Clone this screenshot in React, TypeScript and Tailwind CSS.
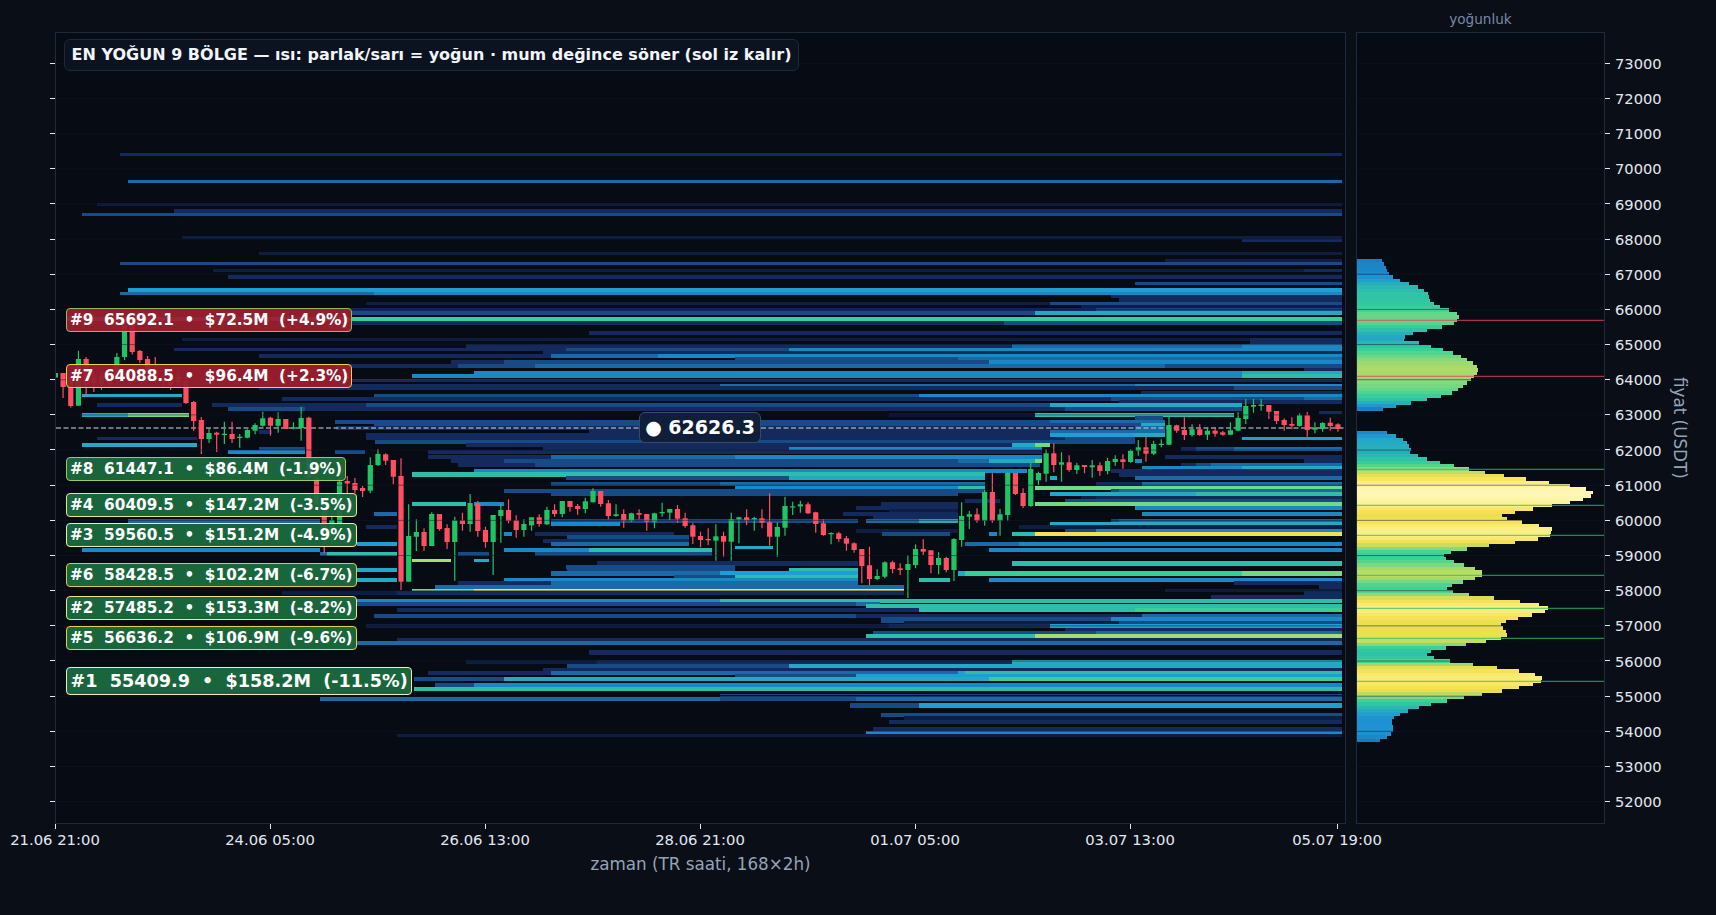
import { type JSX } from "react";

const FONT = "[font-family:'DejaVu_Sans',sans-serif]";

// price -> page y, the chart svgs use page coordinates in their viewBox
const priceY = (p: number) => 63.3 + (73000 - p) * 0.03516;
const candleX = (i: number) => 55.4 + 7.68 * i;

const PRICES = Array.from({ length: 22 }, (_, i) => 73000 - i * 1000);

const HEAT_COLORS: Record<string, string> = {
  a: "#0c1632",
  b: "#0f1d40",
  c: "#14295c",
  d: "#184a86",
  e: "#1a6aa8",
  f: "#1b88c6",
  g: "#1f9ed4",
  h: "#22a9c4",
  i: "#2ebdaa",
  j: "#35cf9a",
  k: "#70d986",
  l: "#a9dd6a",
  m: "#f5e050",
  n: "#fff3a0",
};

// y height then segments: start x + colour letter, "_" leaves a gap
const HEAT = `
154.3 2.7 120c
181.3 2.7 128e
204.3 2.7 97b
210.7 3 174c
214.3 2.7 82d
237.7 2.7 182b
240.3 2.5 1242c
253.3 2.7 259b
260.3 2.7 1165b
263.3 2.7 120d
270.3 2.7 213b 1196b 1304c
276.7 3.5 228c
283.3 2.7 1135d
290 4 128g
293.3 2.7 120e 374f
296.3 2.7 1111c
299.7 3 1119c
303.3 2.7 366b 1050d
306.3 2.7 1081b
309.3 2.7 347c 1096d
313.3 3 351d 1035h
319.3 3.3 66j
323 3 351c 1004d
333 3.5 589c
339.3 2.7 182b 1250c
343 2.7 1250c
346 3 466c 1012e 1242f
349.3 2.7 174c 566d 789f
352.3 2.7 543c
356 3.7 259c 551e 658f
359 2.7 735d 958e
362.3 3 451c 504d 989f
365.7 3.2 336c 458d 535e 1165d
369.3 2.7 1304c
372.7 3.7 474f 1242h
376 3.5 412f 1242i
379.3 1.5 351d
381 1.5 351c
385.7 3 351c 720e 1135f
388.3 3 259c 1234d
392.3 2.7 1141c
395.3 2.7 82h 182_ 374d 919f
398.7 3 282c 1111d 1304e
402 2.7 1119c
405.3 3 97c 182_ 212c 366d 1050h 1242_
408.7 3 228d 305c 881c 1065d 1242_
412.3 2.7 1319c
415.3 3 82h 128k 189_ 889a 1035i 1234_
418 2.7 1135d 1163_
421.7 3 335d 1050e 1165_
425 3 374d 1141h 1165_
428 3 336c 1135e 1165_
431.7 3 259c 272_ 589c 1050e 1165_
435.3 3 366c 1050g 1135h 1165_
438.5 3 97c 197_ 366c 1065d 1135_ 1242g
442 3 375d 1096d 1135_
445.3 3 82h 197_ 466c 1012h 1035k 1050_
448.7 3 259d 305_ 543c 789f 1042_ 1181c 1196d 1234e
452 3.2 228f 305_ 335d 365_ 428c 1042_
457.3 3 428c 551e 735f 1042_ 1165c
461.3 3 451c 504d 958e 989h 1035k 1042_ 1135f 1142_ 1304c
465 3 458c 535d 1040_ 1181c 1196d 1211e
468.3 3 1142f 1242h
471.3 3 474f 1027_ 1111c
474.7 4 412i 985_ 1119c
478.3 3 566d 789h 985_ 1050h 1057_ 1135e
484.3 3 551d 720e 985_ 1096c 1142e
488 4 735f 958i 985_ 1035k
490.7 3 504d 985_ 1111d 1119e
494.3 3 551d 958_ 1050h 1196i
497.7 3 1081b 1096c
501.3 3 965c 1000_ 1065d
504.3 3 412i 466_ 474f 504_ 881c 958_ 1035k
507.7 3.5 856c 958_ 1135f
511 3 889b 958_
514.3 3 374e 397_ 843c 958_ 1142f
517.5 3 873c 958_
521 3 128e 320_ 551d 858_ 866e 919h 958_ 1111d 1119e
524.3 3 551f 620_ 1050h
527.3 3 366c 397_ 1019b
530.7 3.5 856b 958_ 1065d 1096f
534.3 3.3 504f 512_ 535c 674_ 882d 950_ 989f 997_ 1012i 1035m
537.2 3 567d 689_
540.7 3 543c 689_
544.3 3 357g 397_ 551e 689_ 965e 1019f
547.5 3 735h 773_
550.3 3 82f 320_ 504f 589i 712_ 989f
554 3 320e 327i 397_ 458d 489_ 535d 712_
560.5 3 412l 451_ 474h 489_
563.7 4 597c 858_ 1012i
566.7 3 566d 597d 735_
570.3 3 357h 397_ 567d 735_ 789i 858_
573.7 4 551e 720g 858_ 958h 965j 1242k
577 3 674d 735i 858_
580.3 3 357h 397_ 504f 858_ 919i 950_ 989f
583.3 3 458c 551e 858_ 1234c
587 3 435e 904_ 1319c
590.3 2.5 412k 474m 904_ 1165b
593.3 3 282b 397c 904_ 1304c
596.7 3 1211c
600.7 3.5 357f 720i
604 3 357d 856e 880_
607 5 866i
610.3 3.2 397c 919i 1135j
616.3 3 374d 856c 1142e
619.7 5 881d 1111f
623 3 904b 1119d
626.3 3 366b 889c 1050g
629.7 3 1065c
633.3 3 873d 1096e
636.3 3.3 866i 1035l
640 3 397c
643.3 3 357e 1004e
652.7 4 589c
662.3 3 466b 597c 1012h
666.3 3 567d 789h
669.5 2.5 543c
673 4 428c 551e 958g 965i
676.3 3 735d 856g
679.3 3 414d 504h 989j
685.7 4 435d 474f
689.3 3 414i
694.7 1.5 720d
696.2 1.2 720d
699.3 3 320e 720d 856e
705.7 4 850d 919g
715.3 3 881d
718 2.5 904b
722.3 3 889c
728.7 3 873c
732.3 2 866f
735.3 2.5 397b
`;

const HEAT_END = 1342;

const HEAT_RECTS = HEAT.trim()
  .split("\n")
  .flatMap((line) => {
    const [y, h, ...segs] = line.trim().split(" ");
    const height = Number(h) < 2 ? Number(h) : Number(h) + 0.7;
    return segs.map((s, i) => ({
      x: parseFloat(s),
      end: i + 1 < segs.length ? parseFloat(segs[i + 1]) : HEAT_END,
      color: s.slice(-1),
      y: Number(y) - height / 2,
      h: height,
    }));
  })
  .filter((r) => r.color !== "_");

// colour, body top, body bottom, wick top, wick bottom (page px), index = candle number
type Candle = ["g" | "r", number, number, number, number];
const CANDLES: Candle[] = [
  ["g", 373, 377.5, 372, 378], ["r", 373, 387, 373, 398], ["r", 377, 406, 375, 407.5], ["g", 359, 405.7, 350.7, 405.7],
  ["r", 359, 385, 357, 395], ["r", 378, 383, 372, 392], ["g", 376, 384, 372, 390], ["r", 378, 384, 374, 388],
  ["g", 357, 380, 353, 382], ["g", 325, 357, 318, 360], ["r", 322, 352, 318, 354.5], ["r", 351, 360, 350, 363],
  ["r", 359, 372, 356, 378], ["r", 372, 381, 357, 385], ["r", 379, 382, 375, 388], ["r", 380, 385, 376, 390],
  ["g", 377, 382, 372, 386], ["r", 380, 403, 376, 404], ["r", 402, 421, 401, 431], ["r", 420, 439, 417, 454],
  ["g", 433, 439, 428, 443], ["r", 432.7, 434.7, 431.7, 452], ["g", 433.7, 435, 421.7, 444], ["r", 434, 439, 421.7, 443],
  ["g", 436.7, 438, 434, 447.7], ["g", 430, 437.7, 429.3, 438.3], ["g", 425, 430.7, 423.3, 434.3], ["g", 418.3, 425.7, 411.7, 426.7],
  ["r", 417.7, 425.7, 416.7, 435.7], ["g", 419, 425.7, 412.3, 432.7], ["r", 419, 429, 419, 429], ["g", 427.3, 428.7, 422.3, 429.3],
  ["g", 418, 428, 406.7, 440.7], ["r", 417.7, 478, 416.7, 480], ["r", 478, 505, 476, 508], ["r", 505, 540, 503, 553],
  ["g", 520, 540, 515, 545], ["g", 481.7, 525, 478, 527], ["r", 481, 483.5, 476, 495], ["r", 483, 490, 478, 493],
  ["r", 488, 491, 486, 497], ["g", 465, 490.7, 457.3, 493.3], ["g", 454, 465, 449, 466], ["r", 454.3, 460.7, 453.3, 465],
  ["r", 460, 476.7, 460, 484.3], ["r", 476, 581.7, 458.3, 590], ["g", 536, 581.7, 504.3, 581.7], ["g", 532, 536.7, 519.3, 551],
  ["r", 532, 546, 528.3, 550.7], ["g", 514, 546, 512.3, 546], ["r", 514, 529, 514, 530.7], ["r", 528, 542, 524.3, 549],
  ["g", 520.3, 542, 516.7, 580.7], ["r", 520.3, 524, 512.7, 530.7], ["g", 503, 524, 494, 531.7], ["r", 503, 531, 501, 536.7],
  ["r", 530, 542, 526.7, 547.7], ["g", 515, 542, 515, 575], ["g", 510, 516, 503.3, 542.7], ["r", 510, 521, 499.3, 523.3],
  ["r", 520.3, 530, 515.3, 537.7], ["g", 524, 530, 519.3, 536.7], ["g", 517.3, 525.3, 517.3, 530.7], ["r", 517.3, 524, 514.3, 526.7],
  ["g", 510, 524.3, 506.7, 525], ["r", 510, 514, 504.3, 516.7], ["g", 501, 514, 501, 517.3], ["r", 501, 507, 501, 511.7],
  ["r", 506, 509, 504, 514.7], ["g", 501.3, 509, 497.7, 513.3], ["g", 491, 502.3, 488.3, 502.3], ["r", 491, 504, 491, 506.7],
  ["r", 503.3, 516, 500, 519.3], ["g", 514.3, 516, 504.3, 516.7], ["r", 514, 520.7, 509.3, 527.7], ["g", 513.3, 520.7, 512.7, 522],
  ["r", 513, 514.7, 509.3, 519.3], ["r", 514, 521.7, 514, 530.7], ["g", 513.3, 521.7, 512.7, 528.3], ["g", 512, 513.3, 502.7, 516.7],
  ["g", 509, 512.7, 509, 520], ["r", 509, 518.7, 505, 522.7], ["r", 518.3, 526, 512.7, 527.7], ["r", 525.3, 536.7, 523.3, 544],
  ["r", 536, 540, 531.7, 547.3], ["r", 539, 540.3, 528.3, 545], ["g", 536.3, 540.7, 524.3, 560.7], ["r", 536, 541.7, 531.7, 556.7],
  ["g", 519.3, 541.7, 512.7, 560.7], ["g", 517.3, 519.3, 516.7, 543.3], ["r", 517.3, 520.3, 509.3, 525], ["g", 518, 519.3, 516.7, 530.7],
  ["r", 518.3, 522.7, 509.3, 528.3], ["r", 522.3, 536.7, 493.3, 545.7], ["g", 527, 536.7, 522.3, 556.7], ["g", 506, 527.7, 496.7, 535.7],
  ["g", 506.3, 507, 501.7, 515], ["g", 504.3, 506.3, 500.7, 512.7], ["r", 504.3, 513.3, 502.3, 514], ["r", 512.3, 524, 511.7, 532.7],
  ["r", 523.3, 535, 519.3, 535.7], ["g", 533, 534.3, 532.3, 544.3], ["r", 533.3, 539, 531.7, 541.7], ["r", 538.3, 543.7, 536, 550.7],
  ["r", 543.3, 550, 542.3, 552.7], ["r", 549, 566, 549, 583.3], ["r", 565.3, 579, 546.7, 585], ["g", 576, 579, 569.3, 580],
  ["g", 562.3, 576.7, 561.3, 578.3], ["r", 562.3, 569, 560.7, 573.3], ["r", 568.3, 570, 563.3, 575], ["g", 564, 570, 555.3, 598],
  ["g", 549, 565, 544.3, 568.3], ["r", 549, 551.7, 539.3, 555], ["r", 550.3, 565, 550.3, 573.3], ["g", 558, 565, 552.3, 574.3],
  ["r", 558, 570, 556.7, 572.3], ["g", 539, 570, 538.3, 581], ["g", 516, 540, 502.3, 546.7], ["g", 514.3, 516.7, 511, 529],
  ["r", 514.3, 520.7, 508.3, 522.7], ["g", 492, 520.7, 490, 525.7], ["r", 492, 520.7, 473.3, 522.7], ["g", 514.3, 520.7, 509, 535.7],
  ["g", 473, 515, 471.7, 520.7], ["r", 473, 494, 473, 495], ["r", 493, 506, 488.3, 508], ["g", 469, 506, 461, 506.7],
  ["g", 473, 480.3, 471.7, 485], ["g", 453.3, 473.7, 449.3, 481.7], ["r", 453.3, 465, 443.3, 472.3], ["g", 462.3, 464.7, 452.3, 481.7],
  ["r", 462.3, 470, 455.3, 471.7], ["g", 465.3, 470, 462.7, 474], ["r", 465, 467, 465, 473.3], ["g", 465.3, 467.3, 460, 477.7],
  ["r", 465.3, 471, 462.3, 475.7], ["g", 461, 471, 457.7, 474.3], ["g", 459, 462, 455.3, 465.7], ["r", 459.3, 462, 454.3, 468.7],
  ["g", 450.7, 462, 449.3, 462.7], ["g", 447.3, 450.7, 440, 455.7], ["r", 447.3, 453.7, 436.7, 461.7], ["g", 444, 453.7, 440.7, 455],
  ["g", 443.7, 445, 439.3, 447.3], ["g", 425, 444.7, 416.7, 445], ["r", 425.3, 430.7, 424.7, 432.7], ["r", 430, 435, 417.3, 440],
  ["g", 429.3, 435, 424.3, 436.7], ["r", 429.3, 435, 424.3, 435.7], ["g", 430.7, 434.7, 427.3, 440], ["r", 430.7, 433.7, 427.3, 436.7],
  ["r", 432.3, 434.7, 431, 435.7], ["g", 430.3, 434.7, 422.3, 434.7], ["g", 418, 430.7, 412.3, 431.3], ["g", 406, 419, 399, 424],
  ["g", 405, 406.7, 399, 412.7], ["g", 404.7, 406, 399, 410.7], ["r", 405, 411.7, 405, 419], ["r", 411, 421, 411, 424],
  ["r", 420, 425, 418.3, 430.7], ["r", 424, 425.7, 417.3, 429.3], ["g", 415.3, 426, 413.3, 426.7], ["r", 415.3, 430, 412, 436.7],
  ["g", 427.7, 429.7, 422.3, 433.3], ["g", 423, 429, 422.3, 431.7], ["r", 422.7, 426, 417.7, 430.7], ["r", 424.3, 429, 423.3, 431.7],
];

// density profile on the right, bar widths from top to bottom
const PROFILE_TOP = [
  25, 27, 29, 30, 32, 36, 43, 52, 61, 67, 71, 72, 73, 77, 83, 92, 100, 102, 100, 97, 85, 70, 56, 48, 47, 62, 74, 86, 96,
  104, 110, 116, 120, 121, 120, 117, 114, 110, 106, 101, 95, 84, 70, 54, 39, 26,
];
const PROFILE_BOTTOM = [
  30, 39, 46, 50, 52, 54, 53, 61, 70, 83, 97, 112, 128, 147, 169, 192, 213, 229, 236, 234, 226, 213, 195, 176, 158, 145,
  150, 165, 182, 195, 194, 193, 181, 158, 132, 110, 94, 87, 89, 97, 107, 118, 125, 125, 118, 106, 95, 90, 96, 112, 137,
  163, 182, 191, 188, 175, 161, 149, 144, 146, 149, 150, 144, 129, 109, 89, 74, 70, 77, 93, 116, 140, 162, 178, 185, 184,
  176, 162, 145, 125, 107, 90, 74, 62, 51, 43, 37, 35, 35, 36, 36, 34, 30, 23,
];

const PROFILE_STOPS: [number, number, number, number][] = [
  [0, 0x16, 0x5a, 0xa0],
  [22, 0x1c, 0x78, 0xbf],
  [36, 0x1e, 0x93, 0xd3],
  [45, 0x22, 0xa5, 0xc8],
  [60, 0x2b, 0xb6, 0xb4],
  [75, 0x33, 0xc6, 0xa3],
  [90, 0x3b, 0xd2, 0x96],
  [100, 0x5f, 0xd6, 0x8a],
  [112, 0x8f, 0xd9, 0x78],
  [125, 0xb9, 0xdc, 0x62],
  [140, 0xe4, 0xdf, 0x52],
  [155, 0xf3, 0xdf, 0x4f],
  [175, 0xf8, 0xe7, 0x66],
  [200, 0xfb, 0xf0, 0x91],
  [236, 0xff, 0xf6, 0xb5],
];

function profileColor(w: number): string {
  let i = 0;
  while (i < PROFILE_STOPS.length - 2 && w > PROFILE_STOPS[i + 1][0]) i++;
  const a = PROFILE_STOPS[i];
  const b = PROFILE_STOPS[i + 1];
  const t = Math.min(1, (w - a[0]) / (b[0] - a[0]));
  const mix = (k: number) => Math.round(a[k] + (b[k] - a[k]) * t);
  return `rgb(${mix(1)},${mix(2)},${mix(3)})`;
}

const LEVEL_LINES = [
  { y: 320.3, color: "#ef4455" },
  { y: 376.3, color: "#ef4455" },
  { y: 469.3, color: "#22c55e" },
  { y: 505.3, color: "#22c55e" },
  { y: 535.3, color: "#22c55e" },
  { y: 575.3, color: "#22c55e" },
  { y: 608.3, color: "#22c55e" },
  { y: 638.3, color: "#22c55e" },
  { y: 681.3, color: "#22c55e" },
];

const RED = "bg-[#9b1f2e]/95";
const GREEN = "bg-[#1a6b3f]/95";

const LABELS = [
  { text: "#9  65692.1  •  $72.5M  (+4.9%)", pos: "top-[275px]", bg: RED, border: "border-[#8fbc62]" },
  { text: "#7  64088.5  •  $96.4M  (+2.3%)", pos: "top-[331px]", bg: RED, border: "border-[#e6d44a]" },
  { text: "#8  61447.1  •  $86.4M  (-1.9%)", pos: "top-[424px]", bg: GREEN, border: "border-[#a6c658]" },
  { text: "#4  60409.5  •  $147.2M  (-3.5%)", pos: "top-[460px]", bg: GREEN, border: "border-[#efe68a]" },
  { text: "#3  59560.5  •  $151.2M  (-4.9%)", pos: "top-[490px]", bg: GREEN, border: "border-[#f5ee9c]" },
  { text: "#6  58428.5  •  $102.2M  (-6.7%)", pos: "top-[530px]", bg: GREEN, border: "border-[#dcc93f]" },
  { text: "#2  57485.2  •  $153.3M  (-8.2%)", pos: "top-[563px]", bg: GREEN, border: "border-[#efe68a]" },
  { text: "#5  56636.2  •  $106.9M  (-9.6%)", pos: "top-[593px]", bg: GREEN, border: "border-[#e3d24a]" },
];

const TIME_TICKS = [
  { label: "21.06 21:00", w: "w-[215px]" },
  { label: "24.06 05:00", w: "w-[215px]" },
  { label: "26.06 13:00", w: "w-[215px]" },
  { label: "28.06 21:00", w: "w-[215px]" },
  { label: "01.07 05:00", w: "w-[215px]" },
  { label: "03.07 13:00", w: "w-[207px]" },
  { label: "05.07 19:00", w: "w-[40px]" },
];

function GridLines({ x1, x2 }: { x1: number; x2: number }): JSX.Element {
  return (
    <g stroke="#111827" strokeOpacity={0.5} strokeWidth={1}>
      {PRICES.map((p) => (
        <line key={p} x1={x1} x2={x2} y1={priceY(p)} y2={priceY(p)} />
      ))}
    </g>
  );
}

function HeatChart(): JSX.Element {
  return (
    <svg className="block h-full w-full" viewBox="56 33 1289 790" preserveAspectRatio="none">
      <g shapeRendering="crispEdges">
        {HEAT_RECTS.map((r, i) => (
          <rect key={i} x={r.x} y={r.y} width={r.end - r.x} height={r.h} fill={HEAT_COLORS[r.color]} />
        ))}
      </g>
      <line x1={56} x2={1345} y1={428} y2={428} stroke="#b8bcc2" strokeOpacity={0.8} strokeWidth={1.3} strokeDasharray="5 2.5" />
      {CANDLES.map(([c, top, bottom, high, low], i) => {
        const x = candleX(i);
        const color = c === "g" ? "#22c365" : "#ff4f62";
        return (
          <g key={i}>
            <line x1={x} x2={x} y1={high} y2={low} stroke={color} strokeWidth={1.2} />
            <rect x={x - 2.6} y={top} width={5.2} height={Math.max(bottom - top, 1.2)} fill={color} />
          </g>
        );
      })}
      <GridLines x1={56} x2={1345} />
    </svg>
  );
}

function ProfileBars({ widths, top, bottom }: { widths: number[]; top: number; bottom: number }): JSX.Element {
  const step = (bottom - top) / widths.length;
  return (
    <g shapeRendering="crispEdges">
      {widths.map((w, i) => (
        <rect key={i} x={1357} y={top + i * step} width={w} height={step + 0.4} fill={profileColor(w)} />
      ))}
    </g>
  );
}

function ProfileChart(): JSX.Element {
  return (
    <svg className="block h-full w-full" viewBox="1357 33 247 790" preserveAspectRatio="none">
      <ProfileBars widths={PROFILE_TOP} top={259} bottom={410.7} />
      <ProfileBars widths={PROFILE_BOTTOM} top={431} bottom={742} />
      <GridLines x1={1357} x2={1604} />
      {LEVEL_LINES.map((l) => (
        <line key={l.y} x1={1357} x2={1604} y1={l.y} y2={l.y} stroke={l.color} strokeOpacity={0.7} strokeWidth={1.2} />
      ))}
    </svg>
  );
}

export default function App(): JSX.Element {
  return (
    <div className={`flex h-[915px] w-[1716px] flex-col overflow-hidden bg-[#0a0e17] ${FONT}`}>
      {/* panel title row */}
      <div className="flex h-[32px] pl-[1356px]">
        <div className="w-[249px] pt-[11px] text-center text-[13.6px] leading-[17px] text-[#7c89a8]">yoğunluk</div>
      </div>

      <div className="flex h-[792px]">
        {/* left tick marks */}
        <div className="flex w-[55px] flex-col pt-[13.7px]">
          {PRICES.map((p) => (
            <div key={p} className="flex h-[35.16px] shrink-0 items-center justify-end">
              <div className="h-px w-[5px] bg-[#e2e8f0]" />
            </div>
          ))}
        </div>

        {/* main heatmap */}
        <div className="relative h-[792px] w-[1291px] border border-[#1e293b] bg-[#070b14]">
          <HeatChart />

          <div className="absolute left-[8px] top-[6px] flex h-[32px] w-[735px] items-center justify-center rounded-[6px] border border-[#1e293b] bg-[#0b1220] text-[16px] font-bold whitespace-pre text-[#f1f5f9]">
            EN YOĞUN 9 BÖLGE — ısı: parlak/sarı = yoğun · mum değince söner (sol iz kalır)
          </div>

          {LABELS.map((l) => (
            <div
              key={l.text}
              className={`absolute left-[10px] ${l.pos} flex h-[24px] items-center rounded-[4px] border-[1.5px] px-[3px] text-[15.3px] font-bold whitespace-pre text-white ${l.bg} ${l.border}`}
            >
              {l.text}
            </div>
          ))}
          <div className="absolute left-[10px] top-[634px] flex h-[28px] items-center rounded-[4px] border-[1.5px] border-[#f3eeb0] bg-[#1a6b3f]/95 px-[3.5px] text-[17.6px] font-bold whitespace-pre text-white">
            #1  55409.9  •  $158.2M  (-11.5%)
          </div>

          <div className="absolute left-[583px] top-[379px] flex h-[31px] w-[122px] items-center justify-center rounded-[6px] border border-[#3a4a66] bg-[#0f1f3a] text-[19px] font-bold whitespace-pre text-white">
            ● 62626.3
          </div>
        </div>

        <div className="w-[10px]" />

        {/* density profile */}
        <div className="h-[792px] w-[249px] border border-[#1e293b] bg-[#070b14]">
          <ProfileChart />
        </div>

        {/* price axis */}
        <div className="flex w-[60px] flex-col pt-[13.7px]">
          {PRICES.map((p) => (
            <div key={p} className="flex h-[35.16px] shrink-0 items-center gap-[5px]">
              <div className="h-px w-[5px] bg-[#e2e8f0]" />
              <span className="pt-[2px] text-[14.67px] leading-none text-[#e2e8f0]">{p}</span>
            </div>
          ))}
        </div>
        <div className="flex w-[28px] items-center justify-center">
          <span className="text-[16.75px] whitespace-pre text-[#94a3b8] [writing-mode:vertical-rl]">fiyat (USDT)</span>
        </div>
      </div>

      {/* time axis */}
      <div className="flex pl-[55px]">
        {TIME_TICKS.map((t) => (
          <div key={t.label} className={`${t.w} shrink-0`}>
            <div className="h-[5px] w-px bg-[#e2e8f0]" />
            <div className="mt-[2px] w-fit -translate-x-1/2 text-[14.8px] leading-[18px] whitespace-pre text-[#e2e8f0]">
              {t.label}
            </div>
          </div>
        ))}
      </div>
      <div className="ml-[55px] w-[1291px] pt-[5px] text-center text-[16.75px] leading-[20px] text-[#94a3b8]">
        zaman (TR saati, 168×2h)
      </div>
    </div>
  );
}
